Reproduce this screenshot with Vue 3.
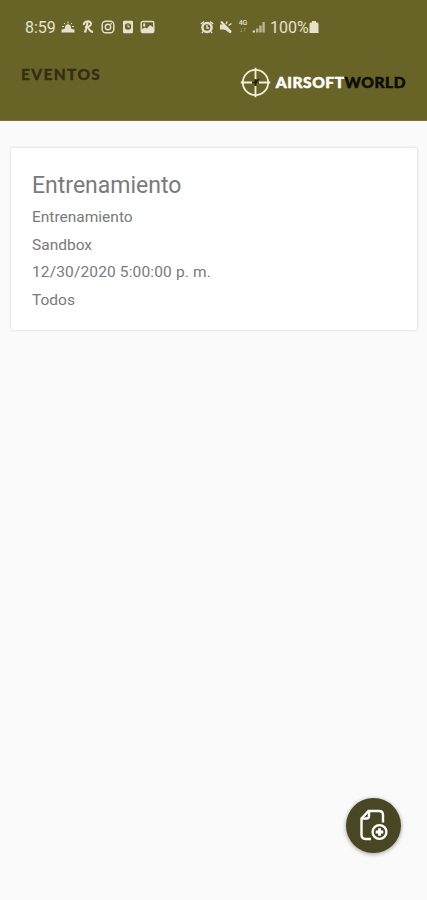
<template>
  <div class="page">
    <header class="header">
      <!-- status bar -->
      <div class="status">
        <label class="clock">8:59</label>
        <div class="status-left">
          <svg width="14" height="14" viewBox="0 0 14 14">
            <path class="fill" d="M.5 12.500V9.500l3-.5 1-3.500 2.500-1.500L9.500 5.500l1 3.500 3 .5v3z" />
            <path class="line thin" d="M7 1.500v2M3 3l1.200 1.200M11 3L9.800 4.200M1 6.500h2M11 6.500h2" />
          </svg>
          <svg width="14" height="14" viewBox="0 0 14 14">
            <path class="line bold" d="M3 5C2 1.500 9 0 10 3.200C10.500 6 6 7.500 4 7M6.500 2.500L4.500 11.500M3 11.500h2.500M7 7.500c1 1.500 2 4.500 5 4.500" />
          </svg>
          <svg width="14" height="14" viewBox="0 0 14 14">
            <rect class="line" x="1.200" y="1.200" width="11.600" height="11.600" rx="3.500" />
            <circle class="line" cx="7" cy="7" r="2.700" />
            <circle class="fill" cx="10.300" cy="3.700" r=".8" />
          </svg>
          <svg width="14" height="14" viewBox="0 0 14 14">
            <rect class="fill" x="2" y=".8" width="10" height="12.400" rx="1.200" />
            <circle class="dark-fill" cx="7" cy="6.500" r="3.200" />
            <path class="line thin" d="M7 4.500v2.300h1.700" />
          </svg>
          <svg width="15" height="14" viewBox="0 0 15 14">
            <rect class="line" x="1.200" y="1.500" width="12.600" height="11" rx="1.500" />
            <path class="fill" d="M2 12V9l3-1.500 2 1 3-3.500 4 3V12zM3.200 3.500h2v3h-2z" />
          </svg>
        </div>
        <div class="status-right">
          <svg width="14" height="14" viewBox="0 0 14 14">
            <circle class="fill" cx="7" cy="7.500" r="5.800" />
            <circle class="dark-fill" cx="7" cy="7.500" r="3.300" />
            <path class="line" d="M.8 4L4 1.500M13.200 4L10 1.500M7 5v3h2M3 11.800l-1.200 1.200M11 11.800l1.200 1.200" />
          </svg>
          <svg width="14" height="14" viewBox="0 0 14 14">
            <path class="fill" d="M1 4.500h4L8.500 7l4 5.200-1.500 1L6.500 10 4 9.500H1z" />
            <path class="line bold" d="M2 1.500l10 10.500" />
            <path class="line" d="M7 4l1.200-2.500M9.500 5.500l3-2" />
          </svg>
          <div class="network">
            <label>4G</label>
            <label class="arrows">↓↑</label>
          </div>
          <svg width="14" height="14" viewBox="0 0 14 14">
            <path class="fill" d="M.8 10.500h2.200v2H.8z" />
            <path class="fill soft" d="M4 8.500h2.500v4H4zM7.200 5.500h2.500v7H7.200zM10.400 2h2.400v10.500h-2.400z" />
          </svg>
          <label class="percent">100%</label>
          <svg class="battery" width="10" height="14" viewBox="0 0 10 14">
            <path class="fill" d="M3 1h4v1.500h1q1.500 0 1.500 1.500v9h-9V4Q.5 2.500 2 2.500h1z" />
          </svg>
        </div>
      </div>

      <!-- title and logo -->
      <div class="toolbar">
        <h1>EVENTOS</h1>
        <div class="logo">
          <svg width="31" height="31" viewBox="0 0 31 31">
            <circle class="ring" cx="15.500" cy="15.500" r="12.700" />
            <path class="ring" d="M15.500 .8v11.200M15.500 19v11.200M.8 15.500h11.200M19 15.500h11.200" />
            <path class="sight" d="M15.500 12.500v6M12.500 15.500h5M15 16l4-4" />
          </svg>
          <label class="brand"><span>AIRSOFT</span>WORLD</label>
        </div>
      </div>
    </header>

    <main class="list">
      <div class="card" v-for="(item, index) in eventList" :key="index">
        <h2>{{ item.title }}</h2>
        <p>{{ item.kind }}</p>
        <p>{{ item.place }}</p>
        <p class="date">{{ item.date }}</p>
        <p>{{ item.team }}</p>
      </div>
    </main>

    <!-- new event -->
    <button class="fab">
      <svg width="32" height="34" viewBox="0 0 32 34">
        <path class="doc" d="M14 31H8.500Q4.500 31 4.500 27V10.500L11.500 3H22Q26 3 26 7V14.500" />
        <path class="doc" d="M12 3.500V8Q12 10.500 9.500 10.500H5" />
        <circle class="doc" cx="22.500" cy="24" r="6.900" />
        <path class="plus" d="M22.500 20.200v7.600M18.700 24h7.600" />
      </svg>
    </button>
  </div>
</template>

<script setup>
import { ref } from "vue";

const eventList = ref([
  {
    title: "Entrenamiento",
    kind: "Entrenamiento",
    place: "Sandbox",
    date: "12/30/2020 5:00:00 p. m.",
    team: "Todos",
  },
]);
</script>

<style>
body {
  background-color: #fafafa;
}
</style>

<style scoped>
.page {
  position: relative;
  height: 900px;
  overflow: hidden;
  background-color: #fafafa;
  font-family: Roboto, "Liberation Sans", sans-serif;
}
.header {
  box-sizing: border-box;
  height: 121px;
  background-color: #686428;
  border-bottom: 1px solid #77733f;
}

/* status bar */
.status {
  display: flex;
  align-items: center;
  height: 54px;
  padding-left: 25px;
  color: #e6e1cd;
}
.clock {
  width: 36px;
  font-size: 16px;
}
.status-left,
.status-right {
  display: flex;
  align-items: center;
}
.status-left {
  gap: 6px;
  width: 139px;
}
.status-left svg:last-child {
  margin-left: -1px;
}
.status-right {
  gap: 5px;
}
.network {
  display: flex;
  flex-direction: column;
  align-items: center;
  width: 10px;
  margin-right: -1px;
  font-size: 7px;
  font-weight: 500;
  line-height: 7px;
}
.network .arrows {
  font-size: 7px;
  opacity: 0.7;
}
.percent {
  width: 39px;
  margin-left: -1px;
  font-size: 16px;
}
.battery {
  margin-left: -5px;
}
.fill {
  fill: #e6e1cd;
}
.soft {
  opacity: 0.65;
}
.dark-fill {
  fill: #686428;
}
.line {
  fill: none;
  stroke: #e6e1cd;
  stroke-width: 1.4;
}
.thin {
  stroke-width: 1;
}
.bold {
  stroke-width: 2;
}

/* title and logo */
.toolbar {
  display: flex;
  justify-content: space-between;
  padding: 0 21px;
}
.toolbar h1 {
  margin: 11px 0 0;
  font-family: Lato, sans-serif;
  font-size: 15.5px;
  font-weight: 900;
  line-height: 18px;
  letter-spacing: 1.35px;
  color: #342d14;
  -webkit-text-stroke: 0.3px #342d14;
}
.logo {
  display: flex;
  align-items: center;
  height: 31px;
  margin-top: 13px;
}
.ring {
  fill: none;
  stroke: #f2eedc;
  stroke-width: 1.8;
}
.sight {
  fill: none;
  stroke: #201d0c;
  stroke-width: 1.5;
}
.brand {
  margin: -2px 0 0 5px;
  font-family: Lato, sans-serif;
  font-size: 15.5px;
  font-weight: 900;
  line-height: 18px;
  letter-spacing: 0.55px;
  color: #0e0c04;
  -webkit-text-stroke: 0.5px currentColor;
}
.brand span {
  color: #ffffff;
}

/* events */
.list {
  padding: 27px 10px 0 11px;
}
.card {
  box-sizing: border-box;
  height: 182px;
  padding: 23px 21px 0;
  background-color: #ffffff;
  border-radius: 2px;
  box-shadow: 0 0 3px rgba(0, 0, 0, 0.18);
  color: #7a7a7a;
}
.card h2 {
  margin: 0 0 3px;
  font-size: 23px;
  font-weight: 400;
  line-height: 30px;
}
.card p {
  margin: 0;
  font-size: 15.5px;
  line-height: 27.5px;
}
.card .date {
  letter-spacing: 0.14px;
}

/* floating button */
.fab {
  position: absolute;
  right: 26px;
  bottom: 47px;
  display: flex;
  align-items: center;
  justify-content: center;
  width: 55px;
  height: 55px;
  padding: 0 2px 1px 0;
  border: none;
  border-radius: 50%;
  background-color: #484623;
  box-shadow: 0 1px 4px rgba(0, 0, 0, 0.4);
}
.doc {
  fill: none;
  stroke: #ffffff;
  stroke-width: 2.4;
}
.plus {
  fill: none;
  stroke: #ffffff;
  stroke-width: 3;
}
</style>
